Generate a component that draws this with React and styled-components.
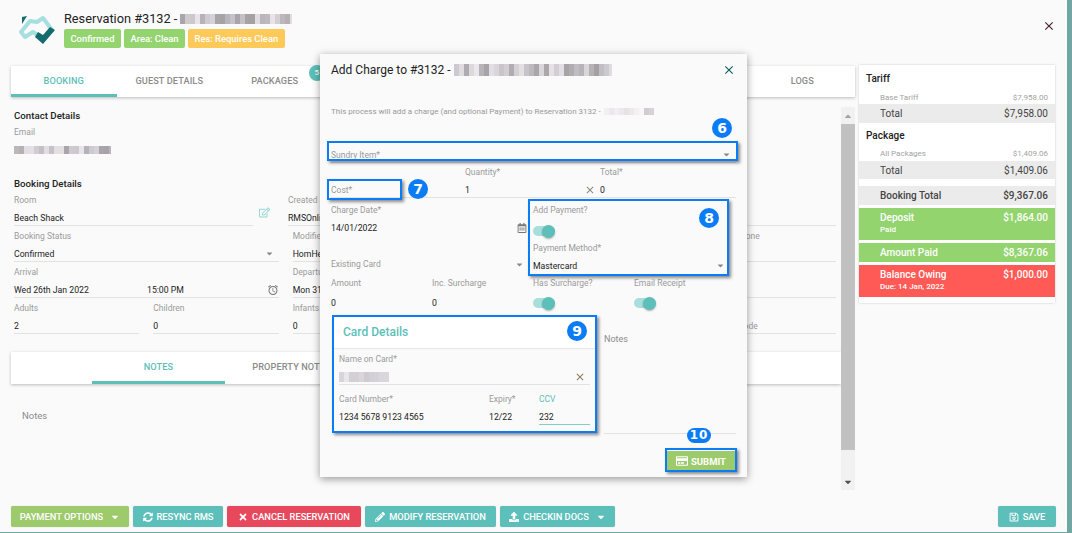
import React from 'react'
import styled, { createGlobalStyle } from 'styled-components'
import { FaCaretDown, FaCaretUp, FaSyncAlt, FaTimes, FaPencilAlt, FaRegSave, FaRegCreditCard, FaRegCalendarAlt, FaRegEdit, FaUpload } from 'react-icons/fa'
import { MdOutlineAlarm, MdClose } from 'react-icons/md'

const teal = '#5dbfb9'
const labelGrey = '#9a9a9a'

const Global = createGlobalStyle`
  html, body { margin: 0; padding: 0; background: #6fa8a2; overflow: hidden; }
  body { font-family: Roboto, "Liberation Sans", sans-serif; color: #222; }
  * { box-sizing: border-box; }
`

const Page = styled.div`
  position: relative;
  width: 1067px;
  height: 532px;
  background: #fafafa;
  display: flex;
  flex-direction: column;
  overflow: hidden;
`

const Header = styled.header`
  height: 66px;
  flex: none;
  display: flex;
  padding: 8px 11px 0 10px;
`
const LogoBox = styled.svg`
  width: 55px;
  height: 45px;
  flex: none;
`
const HeaderText = styled.div`
  flex: 1;
  margin-left: -1px;
  padding-top: 3px;
`
const ResTitle = styled.div`
  display: flex;
  align-items: center;
  font-size: 12.75px;
  line-height: 15px;
  gap: 3px;
`
const Badges = styled.div`
  display: flex;
  gap: 3px;
  margin-top: 3px;
`
const Badge = styled.span`
  background: ${p => p.$bg};
  color: #fff;
  font-size: 9.4px;
  font-weight: 500;
  line-height: 19px;
  padding: 0 6.5px;
  border-radius: 2px;
`
const CloseBtn = styled.div`
  margin-top: 11px;
  color: #4a1f30;
  font-size: 14px;
  line-height: 16px;
`

const Main = styled.main`
  flex: 1;
  min-height: 0;
  display: flex;
  gap: 4px;
  padding: 0 11px;
`
const LeftCol = styled.section`
  width: 844px;
  display: flex;
  flex-direction: column;
`
const TabBar = styled.div`
  display: grid;
  grid-template-columns: repeat(${p => p.$cols}, ${p => p.$w}px);
  height: ${p => p.$h}px;
  flex: none;
  background: #fff;
  padding-left: ${p => p.$pad || 0}px;
  box-shadow: 0 1px 3px rgba(0, 0, 0, 0.25);
`
const Tab = styled.div`
  position: relative;
  display: flex;
  align-items: center;
  justify-content: center;
  font-size: 9.2px;
  font-weight: 500;
  letter-spacing: 0.1px;
  color: ${p => (p.$active ? teal : '#8b8b8b')};
  border-bottom: 3px solid ${p => (p.$active ? teal : 'transparent')};
  white-space: nowrap;
`
const TabCount = styled.span`
  position: absolute;
  top: -1px;
  right: 3px;
  width: 16px;
  height: 16px;
  border-radius: 50%;
  background: ${teal};
  color: #fff;
  font-size: 8px;
  line-height: 16px;
  padding-left: 6px;
`

const ScrollArea = styled.div`
  flex: 1;
  min-height: 0;
  display: flex;
  margin-bottom: 16px;
`
const FormBody = styled.div`
  flex: 1;
  padding: 13px 5px 0 3px;
`
const SectionTitle = styled.h4`
  margin: 0 0 5px;
  font-size: 9.7px;
  line-height: 12px;
  font-weight: 500;
  color: #222;
`
const Label = styled.div`
  font-size: 8.5px;
  line-height: 11px;
  height: 11px;
  color: ${p => (p.$active ? teal : labelGrey)};
  white-space: nowrap;
`
const Value = styled.div`
  display: flex;
  align-items: center;
  justify-content: space-between;
  height: ${p => p.$h || 20}px;
  padding-top: 4px;
  font-size: ${p => (p.$muted ? 8.5 : 8.7)}px;
  color: ${p => (p.$muted ? '#9a9a9a' : '#222')};
  white-space: nowrap;
  border-bottom: 1px solid ${p => (p.$line === 'teal' ? '#7fcfca' : p.$line ? '#e2e2e2' : 'transparent')};
`
const EmailBlock = styled.div`
  margin-bottom: 20px;
`
const Room = styled.div`
  display: grid;
  grid-template-columns: 239px 35px 1fr;
  margin-bottom: 5px;
`
const EditBtn = styled.div`
  color: #8fd6d2;
  font-size: 11px;
  padding: 12px 0 0 6px;
`
const Grid6 = styled.div`
  display: grid;
  grid-template-columns: repeat(6, 1fr);
  column-gap: 14px;
  margin-bottom: 5px;
`
const Cell = styled.div`
  grid-column: span ${p => p.$span || 1};
  min-width: 0;
`
const TimeSplit = styled.span`
  display: inline-block;
  width: 133px;
`
const Caret = styled(FaCaretDown)`
  color: #888;
  font-size: 9px;
  flex: none;
  margin-right: 5px;
`
const ClearIcon = styled(MdClose)`
  color: ${p => p.$c || '#8a8a7a'};
  font-size: 12px;
  flex: none;
  margin-right: 4px;
`
const NotesWrap = styled.div`
  margin: 18px -5px 0 -3px;
`
const NotesLabel = styled.div`
  padding: 26px 0 0 11px;
  font-size: 9.5px;
  line-height: 12px;
  color: #8b8b8b;
`
const Scrollbar = styled.div`
  width: 14px;
  flex: none;
  margin-top: 10px;
  background: #f1f1f1;
  display: flex;
  flex-direction: column;
  align-items: center;
`
const ScrollArrow = styled.div`
  height: 17px;
  flex: none;
  display: flex;
  align-items: center;
  justify-content: center;
  font-size: 10px;
  color: ${p => (p.$dark ? '#505050' : '#a3a3a3')};
`
const ScrollThumb = styled.div`
  width: 100%;
  height: 326px;
  background: #c1c1c1;
`
const Spacer = styled.div`
  flex: 1;
`

const Summary = styled.aside`
  width: 196px;
  height: 238px;
  margin-top: -1px;
  background: #fff;
  box-shadow: 0 0 2px rgba(0, 0, 0, 0.2);
  padding-bottom: 6px;
  display: flex;
  flex-direction: column;
`
const SumHead = styled.div`
  height: ${p => p.$h}px;
  padding: ${p => p.$top}px 0 0 7px;
  font-size: 10px;
  line-height: 12px;
  font-weight: 500;
  color: #222;
`
const SumLine = styled.div`
  display: flex;
  justify-content: space-between;
  height: ${p => p.$h}px;
  font-size: 8px;
  line-height: ${p => p.$h}px;
  color: #a3a3a3;
  padding: 0 7px 0 21px;
`
const SumTotal = styled.div`
  display: flex;
  justify-content: space-between;
  align-items: center;
  height: ${p => p.$h || 19}px;
  flex: none;
  margin-bottom: ${p => p.$mb || 0}px;
  background: #ebebeb;
  font-size: 10px;
  font-weight: ${p => (p.$bold ? 500 : 400)};
  color: #444;
  padding: 0 7px 0 21px;
`
const SumPaid = styled.div`
  flex: none;
  height: ${p => p.$h}px;
  margin-bottom: ${p => p.$mb || 0}px;
  background: ${p => p.$bg};
  color: #fff;
  padding: 0 7px 0 21px;
  font-weight: 500;
`
const SumPaidRow = styled.div`
  display: flex;
  justify-content: space-between;
  font-size: 10px;
  line-height: 19px;
`
const SumSub = styled.div`
  font-size: 8px;
  line-height: 10px;
  margin-top: -2px;
`

const Footer = styled.footer`
  height: 26px;
  flex: none;
  display: flex;
  gap: 4px;
  padding: 0 11px;
`
const ActionBtn = styled.button`
  display: flex;
  align-items: center;
  justify-content: center;
  gap: 4px;
  width: ${p => p.$w}px;
  height: 21px;
  padding: 0;
  border: 0;
  border-radius: 2px;
  background: ${p => p.$bg || teal};
  color: #fff;
  font-family: inherit;
  font-size: 9.3px;
  font-weight: 500;
  box-shadow: 0 0 1px rgba(0, 0, 0, 0.25);
  svg { font-size: 10px; }
`
const BtnCaret = styled(FaCaretDown)`
  margin-left: 3px;
`

const Modal = styled.div`
  position: absolute;
  left: 320px;
  top: 54px;
  width: 427px;
  height: 423px;
  background: #fafafa;
  box-shadow: 0 2px 8px rgba(0, 0, 0, 0.4);
  padding: 0 11px;
  z-index: 2;
`
const ModalTitle = styled.div`
  display: flex;
  align-items: center;
  height: 32px;
  font-size: 12px;
  gap: 3px;
  color: #222;
`
const ModalClose = styled(MdClose)`
  margin-left: auto;
  color: #0f5f63;
  font-size: 14px;
`
const Intro = styled.div`
  display: flex;
  align-items: center;
  gap: 3px;
  margin-top: 19px;
  height: 12px;
  font-size: 8px;
  color: #999;
  white-space: nowrap;
`
const SundryRow = styled.div`
  margin-top: 26px;
`
const Thirds = styled.div`
  display: grid;
  grid-template-columns: 134px 135px 1fr;
  margin-top: 4px;
`
const PaymentGrid = styled.div`
  display: grid;
  grid-template-columns: 202px 1fr;
  margin-top: 7px;
  height: 73px;
`
const StackCol = styled.div`
  display: flex;
  flex-direction: column;
  padding-right: ${p => p.$pr || 0}px;
`
const CalIcon = styled(FaRegCalendarAlt)`
  color: #777;
  font-size: 10px;
  flex: none;
  margin-right: 2px;
`
const Quarters = styled.div`
  display: grid;
  grid-template-columns: repeat(4, 101px);
`
const Toggle = styled.span`
  position: relative;
  display: block;
  width: 22px;
  height: 10px;
  border-radius: 5px;
  background: #a8dfdc;
  &::after {
    content: '';
    position: absolute;
    right: 0;
    top: -1.5px;
    width: 13px;
    height: 13px;
    border-radius: 50%;
    background: ${teal};
    box-shadow: 0 1px 2px rgba(0, 0, 0, 0.3);
  }
`
const CardRow = styled.div`
  display: grid;
  grid-template-columns: 273px 1fr;
  margin-top: 4px;
  height: 116px;
`
const Card = styled.div`
  margin-left: 3px;
  width: 261px;
  background: #fafafa;
`
const CardHead = styled.div`
  height: 31px;
  background: #fff;
  border-bottom: 1px solid #e6e6e6;
  padding-left: 9px;
  font-size: 12px;
  font-weight: 500;
  line-height: 29px;
  color: ${teal};
`
const CardBody = styled.div`
  padding: 5px 5px 0;
`
const CardNums = styled.div`
  display: grid;
  grid-template-columns: 150px 50px 1fr;
  margin-top: 9px;
`
const NotesField = styled.div`
  height: 116px;
  padding-top: 16px;
  font-size: 9px;
  color: #8b8b8b;
  border-bottom: 1px solid #e2e2e2;
`
const SubmitRow = styled.div`
  display: flex;
  justify-content: flex-end;
  margin-top: 17px;
`
const SubmitBtn = styled.button`
  display: flex;
  align-items: center;
  justify-content: center;
  gap: 3px;
  width: 68px;
  height: 20px;
  margin-right: 1px;
  border: 0;
  padding: 0;
  background: #9dca6b;
  color: #fff;
  font-family: inherit;
  font-size: 9.5px;
  font-weight: 700;
  svg { font-size: 12px; }
`

// the blue call-outs that sit over the form
const Callout = styled.div`
  position: absolute;
  left: ${p => p.$x - 320}px;
  top: ${p => p.$y - 54}px;
  width: ${p => p.$w}px;
  height: ${p => p.$h}px;
  border: 2px solid #0a7cf5;
  box-shadow: 2px 2px 3px rgba(0, 0, 0, 0.45);
  pointer-events: none;
`
const Marker = styled.div`
  position: absolute;
  left: ${p => p.$x - 320}px;
  top: ${p => p.$y - 54}px;
  width: ${p => p.$w || 20}px;
  height: ${p => p.$h || 20}px;
  border-radius: 10px;
  background: #0a7cf5;
  color: #fff;
  font-family: "DejaVu Sans", sans-serif;
  font-size: ${p => (p.$w ? 12 : 14)}px;
  font-weight: 700;
  letter-spacing: ${p => (p.$w ? 1 : 0)}px;
  line-height: ${p => p.$h || 20}px;
  text-align: center;
`

const MosaicBar = styled.span`
  display: inline-block;
  width: ${p => p.$w}px;
  height: ${p => p.$h}px;
  flex: none;
  filter: blur(0.4px);
`

// pixelated name, colours are worked out from the seed
const Mosaic = ({ w, h = 8, seed = 3, light }) => {
  const stops = []
  const size = 5
  let n = seed * 97
  for (let x = 0; x < w; x += size) {
    n = (n * 61 + 29) % 211
    const g = (light ? 205 : 165) + (n % (light ? 45 : 70))
    const c = `rgb(${g},${g - 4},${g - 2 + (n % 7)})`
    stops.push(`${c} ${x}px ${x + size}px`)
  }
  return <MosaicBar $w={w} $h={h} style={{ background: `linear-gradient(90deg, ${stops.join(',')})` }} />
}

const Logo = () => (
  <LogoBox viewBox="0 0 55 45">
    <path d="M11 24 L20 13 L27 14 L33 10 L42 22 L33 31 L23 24 L15 29 Z" fill="none" stroke="#a5dfdf" strokeWidth="4" strokeLinejoin="round" />
    <path d="M12 9 L17 8 L12 16 Z" fill="#136b6d" />
    <path d="M25 29 L33 36 L45 22 L40 19 L33 27 L28 24 Z" fill="#136b6d" />
  </LogoBox>
)

const Field = ({ label, children, line = true, muted, active, h }) => (
  <div>
    <Label $active={active}>{label}</Label>
    <Value $line={line} $muted={muted} $h={h}>{children}</Value>
  </div>
)

// tabs 4 to 7 sit behind the dialog, their names can't be read
const mainTabs = ['BOOKING', 'GUEST DETAILS', 'PACKAGES', '', '', '', '', 'LOGS']
const noteTabs = ['NOTES', 'PROPERTY NOTES', '', '', '']

export default function App() {
  return (
    <Page>
      <Global />
      <Header>
        <Logo />
        <HeaderText>
          <ResTitle>Reservation #3132 - <Mosaic w={112} h={10} seed={5} /></ResTitle>
          <Badges>
            <Badge $bg="#93d46f">Confirmed</Badge>
            <Badge $bg="#93d46f">Area: Clean</Badge>
            <Badge $bg="#fdc958">Res: Requires Clean</Badge>
          </Badges>
        </HeaderText>
        <CloseBtn><MdClose /></CloseBtn>
      </Header>

      <Main>
        <LeftCol>
          <TabBar $cols={8} $w={105.5} $h={31}>
            {mainTabs.map((t, i) => (
              <Tab key={i} $active={i === 0}>
                {t}
                {t === 'PACKAGES' && <TabCount>5</TabCount>}
              </Tab>
            ))}
          </TabBar>
          <ScrollArea>
            <FormBody>
              <SectionTitle>Contact Details</SectionTitle>
              <EmailBlock>
                <Field label="Email" line={false}><Mosaic w={97} seed={7} /></Field>
              </EmailBlock>
              <SectionTitle>Booking Details</SectionTitle>
              <Room>
                <Field label="Room">Beach Shack</Field>
                <EditBtn><FaRegEdit /></EditBtn>
                <Field label="Created By">RMSOnline</Field>
              </Room>
              <Grid6>
                <Cell $span={2}><Field label="Booking Status">Confirmed<Caret /></Field></Cell>
                <Cell $span={2}><Field label="Modified By">HomHero</Field></Cell>
                <Cell><Field label=" "> </Field></Cell>
                <Cell><Field label="Home Phone"> </Field></Cell>
              </Grid6>
              <Grid6>
                <Cell $span={2}>
                  <Field label="Arrival">
                    <span><TimeSplit>Wed 26th Jan 2022</TimeSplit>15:00 PM</span>
                    <MdOutlineAlarm color="#777" size={12} />
                  </Field>
                </Cell>
                <Cell $span={2}><Field label="Departure">Mon 31st</Field></Cell>
                <Cell $span={2}><Field label=" "> </Field></Cell>
              </Grid6>
              <Grid6>
                <Cell><Field label="Adults">2</Field></Cell>
                <Cell><Field label="Children">0</Field></Cell>
                <Cell><Field label="Infants">0</Field></Cell>
                <Cell><Field label=" "> </Field></Cell>
                <Cell><Field label=" "> </Field></Cell>
                <Cell><Field label=" " muted>Promo Code</Field></Cell>
              </Grid6>
              <NotesWrap>
                <TabBar $cols={5} $w={133} $h={32} $pad={81}>
                  {noteTabs.map((t, i) => <Tab key={i} $active={i === 0}>{t}</Tab>)}
                </TabBar>
                <NotesLabel>Notes</NotesLabel>
              </NotesWrap>
            </FormBody>
            <Scrollbar>
              <ScrollArrow><FaCaretUp /></ScrollArrow>
              <ScrollThumb />
              <Spacer />
              <ScrollArrow $dark><FaCaretDown /></ScrollArrow>
            </Scrollbar>
          </ScrollArea>
        </LeftCol>

        <Summary>
          <SumHead $h={26} $top={8}>Tariff</SumHead>
          <SumLine $h={13}><span>Base Tariff</span><span>$7,958.00</span></SumLine>
          <SumTotal><span>Total</span><span>$7,958.00</span></SumTotal>
          <SumHead $h={24} $top={7}>Package</SumHead>
          <SumLine $h={14}><span>All Packages</span><span>$1,409.06</span></SumLine>
          <SumTotal $h={18} $mb={7}><span>Total</span><span>$1,409.06</span></SumTotal>
          <SumTotal $mb={3} $bold><span>Booking Total</span><span>$9,367.06</span></SumTotal>
          <SumPaid $bg="#93d46f" $h={32} $mb={3}>
            <SumPaidRow><span>Deposit</span><span>$1,864.00</span></SumPaidRow>
            <SumSub>Paid</SumSub>
          </SumPaid>
          <SumPaid $bg="#93d46f" $h={19} $mb={3}>
            <SumPaidRow><span>Amount Paid</span><span>$8,367.06</span></SumPaidRow>
          </SumPaid>
          <SumPaid $bg="#ff5a55" $h={32}>
            <SumPaidRow><span>Balance Owing</span><span>$1,000.00</span></SumPaidRow>
            <SumSub>Due: 14 Jan, 2022</SumSub>
          </SumPaid>
        </Summary>
      </Main>

      <Footer>
        <ActionBtn $w={118} $bg="#9dca6b">PAYMENT OPTIONS<BtnCaret /></ActionBtn>
        <ActionBtn $w={90}><FaSyncAlt />RESYNC RMS</ActionBtn>
        <ActionBtn $w={134} $bg="#e8485c"><FaTimes />CANCEL RESERVATION</ActionBtn>
        <ActionBtn $w={131}><FaPencilAlt />MODIFY RESERVATION</ActionBtn>
        <ActionBtn $w={115}><FaUpload />CHECKIN DOCS<BtnCaret /></ActionBtn>
        <Spacer />
        <ActionBtn $w={58}><FaRegSave />SAVE</ActionBtn>
      </Footer>

      <Modal>
        <ModalTitle>
          Add Charge to #3132 - <Mosaic w={158} h={12} seed={9} />
          <ModalClose />
        </ModalTitle>
        <Intro>This process will add a charge (and optional Payment) to Reservation 3132 - <Mosaic w={50} h={7} seed={11} light /></Intro>
        <SundryRow>
          <Value $line $muted>Sundry Item*<Caret /></Value>
        </SundryRow>
        <Thirds>
          <div>
            <Label>&nbsp;</Label>
            <Value $line $muted>Cost*</Value>
          </div>
          <Field label="Quantity*">1<ClearIcon /></Field>
          <Field label="Total*">0</Field>
        </Thirds>
        <PaymentGrid>
          <StackCol $pr={4}>
            <Label>Charge Date*</Label>
            <Value>14/01/2022<CalIcon /></Value>
            <Label>&nbsp;</Label>
            <Value $muted $h={31}>Existing Card<Caret /></Value>
          </StackCol>
          <StackCol $pr={6}>
            <Label>Add Payment?</Label>
            <Value $h={27}><Toggle /></Value>
            <Label>Payment Method*</Label>
            <Value>Mastercard<Caret /></Value>
          </StackCol>
        </PaymentGrid>
        <Quarters>
          <Field label="Amount" line={false} h={25}>0</Field>
          <Field label="Inc. Surcharge" line={false} h={25}>0</Field>
          <Field label="Has Surcharge?" line={false} h={25}><Toggle /></Field>
          <Field label="Email Receipt" line={false} h={25}><Toggle /></Field>
        </Quarters>
        <CardRow>
          <Card>
            <CardHead>Card Details</CardHead>
            <CardBody>
              <Field label="Name on Card*"><Mosaic w={50} h={10} seed={13} light /><ClearIcon $c="#8a7a5a" /></Field>
              <CardNums>
                <Field label="Card Number*" line={false}>1234 5678 9123 4565</Field>
                <Field label="Expiry*" line={false}>12/22</Field>
                <Field label="CCV" active line="teal">232</Field>
              </CardNums>
            </CardBody>
          </Card>
          <NotesField>Notes</NotesField>
        </CardRow>
        <SubmitRow>
          <SubmitBtn><FaRegCreditCard />SUBMIT</SubmitBtn>
        </SubmitRow>

        <Callout $x={327} $y={141} $w={411} $h={20} />
        <Callout $x={327} $y={179} $w={75} $h={21} />
        <Callout $x={528} $y={199} $w={201} $h={77} />
        <Callout $x={332} $y={315} $w={265} $h={118} />
        <Callout $x={665} $y={448} $w={72} $h={24} />
        <Marker $x={712} $y={118}>6</Marker>
        <Marker $x={408} $y={179}>7</Marker>
        <Marker $x={699} $y={208}>8</Marker>
        <Marker $x={567} $y={321}>9</Marker>
        <Marker $x={687} $y={428} $w={24} $h={15}>10</Marker>
      </Modal>
    </Page>
  )
}
